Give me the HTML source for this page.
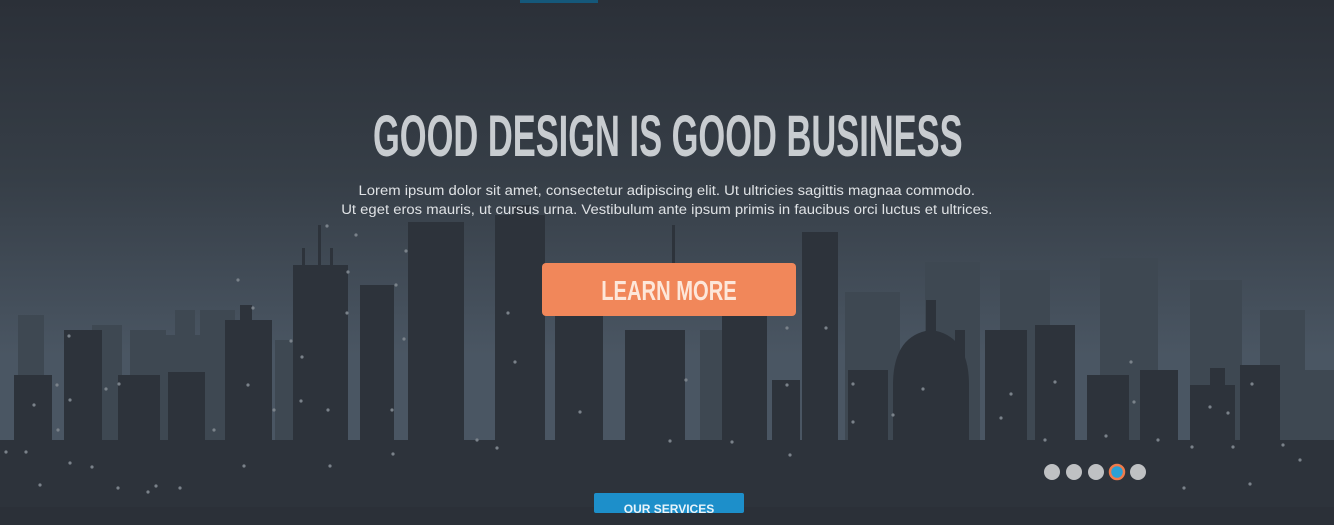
<!DOCTYPE html>
<html><head><meta charset="utf-8"><style>
html,body{margin:0;padding:0;}
body{width:1334px;height:507px;overflow:hidden;position:relative;background:#2b3038;font-family:"Liberation Sans",sans-serif;}
svg{position:absolute;left:0;top:0}
.t{position:absolute;left:0;width:1334px;text-align:center;}
h1{position:absolute;top:106px;left:0;width:1334px;margin:0;text-align:center;font-family:"Liberation Sans",sans-serif;font-weight:bold;font-size:58px;line-height:62px;color:#c8ccd0;transform:scaleX(0.594);transform-origin:669px 0;white-space:nowrap}
.p{top:181px;font-size:13.5px;line-height:19px;color:#dfe2e5;transform:scaleX(1.1);transform-origin:669px 0}
.btn{position:absolute;left:542px;top:263px;width:254px;height:53px;background:#f1875a;border-radius:4px;}
.btn span{position:absolute;left:0;width:254px;top:0;text-align:center;color:#fde7da;font-weight:bold;font-size:28px;line-height:55px;transform:scaleX(0.72)}
.b2{position:absolute;left:594px;top:493px;width:150px;height:20px;background:#1d8fca;border-radius:2px;color:#e8f4fb;font-size:12px;font-weight:bold;text-align:center;line-height:32px}
.top{position:absolute;left:520px;top:0;width:78px;height:3px;background:#15587a}
</style></head><body>
<svg width="1334" height="507" viewBox="0 0 1334 507">
<defs><linearGradient id="g" x1="0" y1="0" x2="0" y2="1">
<stop offset="0" stop-color="#2b3038"/><stop offset="0.35" stop-color="#363e47"/><stop offset="0.7" stop-color="#4a5663"/><stop offset="1" stop-color="#4a5663"/></linearGradient></defs>
<rect width="1334" height="507" fill="url(#g)"/>
<g fill="#3e4852">
<rect x="18" y="315" width="26" height="140"/><rect x="92" y="325" width="30" height="140"/><rect x="130" y="330" width="36" height="140"/>
<rect x="165" y="335" width="40" height="140"/><rect x="200" y="310" width="35" height="140"/><rect x="175" y="310" width="20" height="40"/>
<rect x="845" y="292" width="55" height="160"/><rect x="925" y="262" width="55" height="190"/><rect x="1000" y="270" width="50" height="180"/>
<rect x="1100" y="258" width="58" height="190"/><rect x="1190" y="280" width="52" height="170"/><rect x="1260" y="310" width="45" height="140"/><rect x="1305" y="370" width="29" height="90"/>
<rect x="700" y="330" width="60" height="130"/><rect x="275" y="340" width="25" height="120"/>
</g>
<g fill="#2d333b">
<rect x="0" y="440" width="1334" height="67"/>
<rect x="14" y="375" width="38" height="80"/><rect x="64" y="330" width="38" height="130"/><rect x="118" y="375" width="42" height="90"/>
<rect x="168" y="372" width="37" height="90"/><rect x="225" y="320" width="47" height="140"/><rect x="240" y="305" width="12" height="20"/>
<rect x="293" y="265" width="55" height="190"/><rect x="302" y="248" width="3" height="20"/><rect x="318" y="225" width="3" height="40"/><rect x="330" y="248" width="3" height="20"/>
<rect x="360" y="285" width="34" height="170"/><rect x="408" y="222" width="56" height="240"/><rect x="495" y="215" width="50" height="240"/><rect x="512" y="205" width="18" height="20"/>
<rect x="555" y="315" width="48" height="150"/><rect x="625" y="330" width="60" height="130"/><rect x="672" y="225" width="3" height="40"/>
<rect x="722" y="310" width="45" height="150"/><rect x="772" y="380" width="28" height="80"/><rect x="802" y="232" width="36" height="230"/>
<rect x="848" y="370" width="40" height="90"/><rect x="955" y="330" width="10" height="130"/>
<path d="M893 460 L893 385 Q893 335 931 330 Q969 335 969 385 L969 460Z"/><rect x="926" y="300" width="10" height="35"/>
<rect x="916" y="400" width="40" height="60"/>
<rect x="985" y="330" width="42" height="130"/><rect x="1035" y="325" width="40" height="135"/><rect x="1087" y="375" width="42" height="85"/>
<rect x="1140" y="370" width="38" height="90"/><rect x="1190" y="385" width="45" height="80"/><rect x="1210" y="368" width="15" height="20"/><rect x="1240" y="365" width="40" height="95"/>
<rect x="1290" y="440" width="44" height="30"/>
</g>
<g fill="#7a828a">
<circle cx="57" cy="385" r="1.6"/><circle cx="34" cy="405" r="1.6"/><circle cx="26" cy="452" r="1.6"/><circle cx="6" cy="452" r="1.6"/><circle cx="70" cy="400" r="1.6"/><circle cx="40" cy="485" r="1.6"/>
<circle cx="69" cy="336" r="1.6"/><circle cx="58" cy="430" r="1.6"/><circle cx="70" cy="463" r="1.6"/><circle cx="118" cy="488" r="1.6"/><circle cx="148" cy="492" r="1.6"/>
<circle cx="106" cy="389" r="1.6"/><circle cx="92" cy="467" r="1.6"/><circle cx="119" cy="384" r="1.6"/><circle cx="180" cy="488" r="1.6"/><circle cx="156" cy="486" r="1.6"/>
<circle cx="238" cy="280" r="1.6"/><circle cx="253" cy="308" r="1.6"/><circle cx="291" cy="341" r="1.6"/><circle cx="248" cy="385" r="1.6"/><circle cx="214" cy="430" r="1.6"/><circle cx="244" cy="466" r="1.6"/>
<circle cx="327" cy="226" r="1.6"/><circle cx="348" cy="272" r="1.6"/><circle cx="302" cy="357" r="1.6"/><circle cx="274" cy="410" r="1.6"/><circle cx="301" cy="401" r="1.6"/>
<circle cx="356" cy="235" r="1.6"/><circle cx="347" cy="313" r="1.6"/><circle cx="328" cy="410" r="1.6"/><circle cx="330" cy="466" r="1.6"/>
<circle cx="406" cy="251" r="1.6"/><circle cx="396" cy="285" r="1.6"/><circle cx="404" cy="339" r="1.6"/><circle cx="392" cy="410" r="1.6"/><circle cx="393" cy="454" r="1.6"/>
<circle cx="508" cy="313" r="1.6"/><circle cx="515" cy="362" r="1.6"/><circle cx="497" cy="448" r="1.6"/><circle cx="477" cy="440" r="1.6"/><circle cx="580" cy="412" r="1.6"/>
<circle cx="670" cy="441" r="1.6"/><circle cx="700" cy="295" r="1.6"/><circle cx="686" cy="380" r="1.6"/><circle cx="780" cy="300" r="1.6"/><circle cx="787" cy="385" r="1.6"/>
<circle cx="787" cy="328" r="1.6"/><circle cx="826" cy="328" r="1.6"/><circle cx="790" cy="455" r="1.6"/><circle cx="732" cy="442" r="1.6"/>
<circle cx="853" cy="384" r="1.6"/><circle cx="853" cy="422" r="1.6"/><circle cx="893" cy="415" r="1.6"/><circle cx="923" cy="389" r="1.6"/>
<circle cx="1011" cy="394" r="1.6"/><circle cx="1001" cy="418" r="1.6"/><circle cx="1055" cy="382" r="1.6"/><circle cx="1045" cy="440" r="1.6"/>
<circle cx="1106" cy="436" r="1.6"/><circle cx="1131" cy="362" r="1.6"/><circle cx="1134" cy="402" r="1.6"/><circle cx="1158" cy="440" r="1.6"/>
<circle cx="1192" cy="447" r="1.6"/><circle cx="1210" cy="407" r="1.6"/><circle cx="1233" cy="447" r="1.6"/><circle cx="1228" cy="413" r="1.6"/><circle cx="1283" cy="445" r="1.6"/><circle cx="1252" cy="384" r="1.6"/><circle cx="1300" cy="460" r="1.6"/><circle cx="1184" cy="488" r="1.6"/><circle cx="1250" cy="484" r="1.6"/>
</g>
<g fill="#bfc1c3">
<circle cx="1052" cy="472" r="8"/><circle cx="1074" cy="472" r="8"/><circle cx="1096" cy="472" r="8"/><circle cx="1138" cy="472" r="8"/>
</g>
<circle cx="1117" cy="472" r="7" fill="#2aa0d4" stroke="#f07a4a" stroke-width="2.5"/>
</svg>
<div class="top"></div>
<h1>GOOD DESIGN IS GOOD BUSINESS</h1>
<div class="t p">Lorem ipsum dolor sit amet, consectetur adipiscing elit. Ut ultricies sagittis magnaa commodo.<br>Ut eget eros mauris, ut cursus urna. Vestibulum ante ipsum primis in faucibus orci luctus et ultrices.</div>
<div class="btn"><span>LEARN MORE</span></div>
<div class="b2">OUR SERVICES</div>
</body></html>
